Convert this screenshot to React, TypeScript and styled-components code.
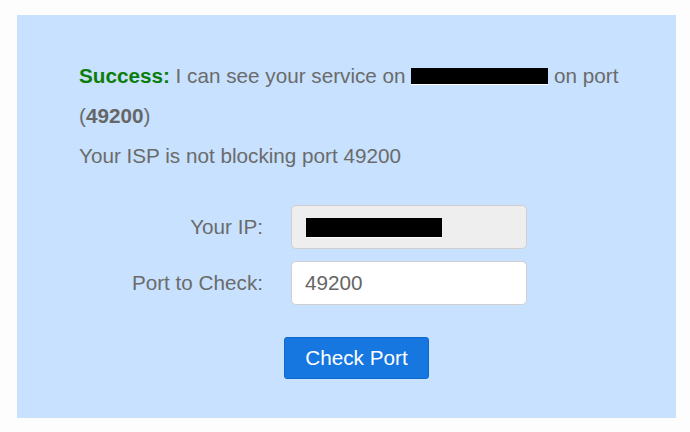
import React from 'react'
import styled, { createGlobalStyle } from 'styled-components'

const GlobalStyle = createGlobalStyle`
  html, body {
    margin: 0;
    background: #fdfdfd;
  }

  body {
    padding: 15px 14px 14px 17px;
    font-family: 'Liberation Sans', Arial, Helvetica, sans-serif;
  }
`

const Panel = styled.section`
  background: #c7e1fe;
  height: 403px;
  box-sizing: border-box;
  padding: 41px 42px 0 62px;
  color: #6b6b6b;
  font-size: 20.7px;
`

const Message = styled.p`
  margin: 0;
  line-height: 40px;

  strong {
    color: #0b7d0b;
  }

  b {
    color: #666;
  }
`

const Redacted = styled.span<{ $width: number }>`
  display: inline-block;
  width: ${({ $width }) => $width}px;
  height: 16px;
  background: #000;
  vertical-align: -1px;
  box-shadow: 0 1px 0 #fff;
`

const Form = styled.form`
  display: grid;
  grid-template-columns: 184px 236px;
  column-gap: 28px;
  row-gap: 12px;
  margin-top: 29px;
`

const Label = styled.label`
  display: flex;
  align-items: center;
  justify-content: flex-end;
  color: #6b6b6b;
`

const Field = styled.div<{ $readOnly?: boolean }>`
  height: 44px;
  box-sizing: border-box;
  border: 1px solid #cfcfcf;
  border-radius: 5px;
  background: ${({ $readOnly }) => ($readOnly ? '#eeeeee' : '#ffffff')};
  display: flex;
  align-items: center;
  padding: 0 13px;
  color: #666;
`

const IpMask = styled.span`
  display: inline-block;
  width: 136px;
  height: 19px;
  margin-left: 1px;
  background: #000;
  box-shadow: 0 1px 0 #fff;
`

const Actions = styled.div`
  display: flex;
  justify-content: center;
  margin-top: 32px;
`

const Button = styled.button`
  width: 145px;
  height: 42px;
  background: #1677e0;
  border: 1px solid #1068cc;
  border-radius: 3px;
  color: #ffffff;
  font-family: inherit;
  font-size: 20.7px;
  padding: 0;
  cursor: pointer;
`

export default function App() {
  return (
    <>
      <GlobalStyle />
      <Panel>
        <Message>
          <strong>Success:</strong> I can see your service on <Redacted $width={137} /> on port{' '}
          <span>
            (<b>49200</b>)
          </span>
        </Message>
        <Message>Your ISP is not blocking port 49200</Message>
        <Form>
          <Label>Your IP:</Label>
          <Field $readOnly>
            <IpMask />
          </Field>
          <Label>Port to Check:</Label>
          <Field>49200</Field>
        </Form>
        <Actions>
          <Button type="button">Check Port</Button>
        </Actions>
      </Panel>
    </>
  )
}
